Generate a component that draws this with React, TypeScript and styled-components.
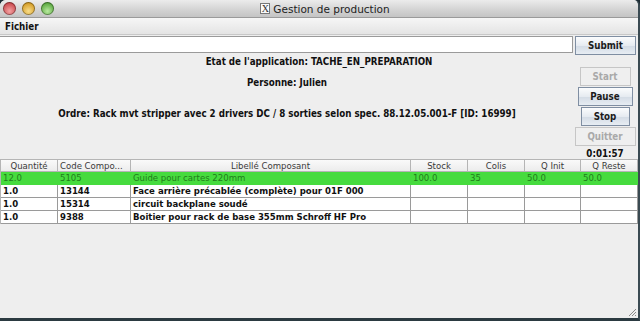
import React from 'react';
import styled, { createGlobalStyle } from 'styled-components';

const GlobalStyle = createGlobalStyle`
  *, *::before, *::after {
    box-sizing: border-box;
  }
  html, body {
    margin: 0;
    padding: 0;
    background: #1d2c33;
  }
  body {
    font-family: "DejaVu Sans Condensed", "DejaVu Sans", sans-serif;
    font-size: 9.7px;
    color: #111;
  }
`;

const Window = styled.div`
  position: relative;
  width: 640px;
  height: 321px;
  display: flex;
  flex-direction: column;
  background: #eeeeee;
  border-radius: 6px 6px 0 0;
  border-right: 2px solid #3a4a52;
  border-bottom: 3px solid #2b3a41;
  overflow: hidden;
`;

const TitleBar = styled.div`
  height: 18px;
  flex: none;
  display: flex;
  align-items: center;
  position: relative;
  background: linear-gradient(#ececec, #d2d2d2 60%, #c4c4c4);
  border-bottom: 1px solid #9a9a9a;
`;

const Lights = styled.div`
  display: flex;
  gap: 6px;
  padding-left: 3px;
`;

const Light = styled.span<{ $c1: string; $c2: string }>`
  width: 13px;
  height: 13px;
  border-radius: 50%;
  background: radial-gradient(circle at 50% 70%, ${p => p.$c1}, ${p => p.$c2} 75%);
  box-shadow: inset 0 0 0 1px rgba(0, 0, 0, 0.35);
`;

const Title = styled.div`
  position: absolute;
  left: 12px;
  right: 0;
  display: flex;
  justify-content: center;
  align-items: center;
  gap: 3px;
  font-family: "DejaVu Sans", sans-serif;
  font-size: 10.5px;
  color: #222;
`;

const XIcon = styled.span`
  width: 10px;
  height: 11px;
  border: 1px solid #777;
  background: #fafafa;
  font-family: "Liberation Serif", serif;
  font-size: 10px;
  line-height: 9px;
  text-align: center;
  color: #333;
`;

const MenuBar = styled.div`
  height: 17px;
  flex: none;
  display: flex;
  align-items: center;
  padding-left: 5px;
  background: linear-gradient(#f6f6f6, #e4e4e4);
  border-bottom: 1px solid #c8c8c8;
  font-weight: bold;
`;

const InputRow = styled.div`
  display: flex;
  align-items: flex-start;
  gap: 2px;
  padding: 1px 2px 0 0;
  height: 19px;
  flex: none;
`;

const TextField = styled.div`
  flex: 1;
  height: 17px;
  background: #fff;
  border: 1px solid #9a9a9a;
  border-left: none;
`;

const Button = styled.div<{ $w: number; $disabled?: boolean }>`
  width: ${p => p.$w}px;
  height: 19px;
  flex: none;
  display: flex;
  align-items: center;
  justify-content: center;
  font-weight: bold;
  color: ${p => (p.$disabled ? '#a9a9a9' : '#1b1b1b')};
  border: 1px solid ${p => (p.$disabled ? '#c6c6c6' : '#7f8ea2')};
  background: ${p =>
    p.$disabled
      ? '#efefef'
      : 'linear-gradient(#fbfcfd, #e6ebf1 50%, #d3dbe5 51%, #e7edf3)'};
`;

const StateLine = styled.div`
  height: 13px;
  flex: none;
  display: flex;
  align-items: center;
  justify-content: center;
  font-weight: bold;
  padding-top: 1px;
`;

const Middle = styled.div`
  display: flex;
  height: 92px;
  flex: none;
`;

const InfoColumn = styled.div`
  flex: 1;
  display: flex;
  flex-direction: column;
  align-items: center;
  font-weight: bold;
`;

const InfoLine = styled.div<{ $top: number }>`
  margin-top: ${p => p.$top}px;
  height: 13px;
  line-height: 13px;
  white-space: nowrap;
`;

const ButtonColumn = styled.div`
  width: 62px;
  display: flex;
  flex-direction: column;
  align-items: center;
  margin-right: 2px;
  gap: 1px;
`;

const Timer = styled.div`
  font-weight: bold;
  margin-top: 1px;
  height: 12px;
  line-height: 12px;
`;

const Table = styled.div`
  width: 638px;
  border-left: 1px solid #b5b5b5;
  font-size: 9.5px;
`;

const cols = '57px 73px 280px 57px 57px 56px 57px';

const HeaderRow = styled.div`
  display: grid;
  grid-template-columns: ${cols};
  height: 13px;
  background: linear-gradient(#fafafa, #ececec);
  border-top: 1px solid #b5b5b5;
  border-bottom: 1px solid #b5b5b5;
`;

const HeadCell = styled.div<{ $left?: boolean }>`
  border-right: 1px solid #b5b5b5;
  font-size: 9.5px;
  color: #3a3a3a;
  line-height: 11px;
  text-align: ${p => (p.$left ? 'left' : 'center')};
  padding-left: ${p => (p.$left ? '2px' : '0')};
  white-space: nowrap;
  overflow: hidden;
`;

const Row = styled.div<{ $selected?: boolean }>`
  display: grid;
  grid-template-columns: ${cols};
  height: 13px;
  background: ${p => (p.$selected ? '#46db3e' : '#ffffff')};
  color: ${p => (p.$selected ? '#1f7d1b' : '#111')};
  font-weight: ${p => (p.$selected ? 'normal' : 'bold')};
  border-bottom: 1px solid ${p => (p.$selected ? '#46db3e' : '#9a9a9a')};
`;

const Cell = styled.div<{ $selected?: boolean }>`
  border-right: 1px solid ${p => (p.$selected ? '#46db3e' : '#9a9a9a')};
  padding-left: 2px;
  line-height: 12px;
  white-space: nowrap;
  overflow: hidden;
`;

const Grip = styled.svg`
  position: absolute;
  right: 1px;
  bottom: 1px;
`;

const headers = ['Quantité', 'Code Compo...', 'Libellé Composant', 'Stock', 'Colis', 'Q Init', 'Q Reste'];

const rows = [
  ['12.0', '5105', 'Guide pour cartes 220mm', '100.0', '35', '50.0', '50.0'],
  ['1.0', '13144', 'Face arrière précablée (complète) pour 01F 000', '', '', '', ''],
  ['1.0', '15314', 'circuit backplane soudé', '', '', '', ''],
  ['1.0', '9388', 'Boitier pour rack de base 355mm Schroff HF Pro', '', '', '', ''],
];

const App = () => {
  return (
    <React.Fragment>
      <GlobalStyle />
      <Window>
        <TitleBar>
          <Lights>
            <Light $c1="#f4a3a3" $c2="#c9454a" />
            <Light $c1="#f9dd8a" $c2="#d39a21" />
            <Light $c1="#b9eaa0" $c2="#55a43a" />
          </Lights>
          <Title>
            <XIcon>X</XIcon>
            Gestion de production
          </Title>
        </TitleBar>
        <MenuBar>Fichier</MenuBar>
        <InputRow>
          <TextField />
          <Button $w={61}>Submit</Button>
        </InputRow>
        <StateLine>Etat de l'application: TACHE_EN_PREPARATION</StateLine>
        <Middle>
          <InfoColumn>
            <InfoLine $top={9}>Personne: Julien</InfoLine>
            <InfoLine $top={18}>Ordre: Rack mvt stripper avec 2 drivers DC / 8 sorties selon spec. 88.12.05.001-F [ID: 16999]</InfoLine>
          </InfoColumn>
          <ButtonColumn>
            <Button $w={51} $disabled>Start</Button>
            <Button $w={55}>Pause</Button>
            <Button $w={49}>Stop</Button>
            <Button $w={61} $disabled>Quitter</Button>
            <Timer>0:01:57</Timer>
          </ButtonColumn>
        </Middle>
        <Table>
          <HeaderRow>
            {headers.map((h, i) => (
              <HeadCell key={h} $left={i === 1}>{h}</HeadCell>
            ))}
          </HeaderRow>
          {rows.map((r, i) => (
            <Row key={r[1]} $selected={i === 0}>
              {r.map((c, j) => (
                <Cell key={j} $selected={i === 0}>{c}</Cell>
              ))}
            </Row>
          ))}
        </Table>
        <Grip width="11" height="11" viewBox="0 0 11 11">
          <path d="M10 3 L3 10 M10 6 L6 10 M10 9 L9 10" stroke="#8a8a8a" strokeWidth="1" />
        </Grip>
      </Window>
    </React.Fragment>
  );
};

export default App;
